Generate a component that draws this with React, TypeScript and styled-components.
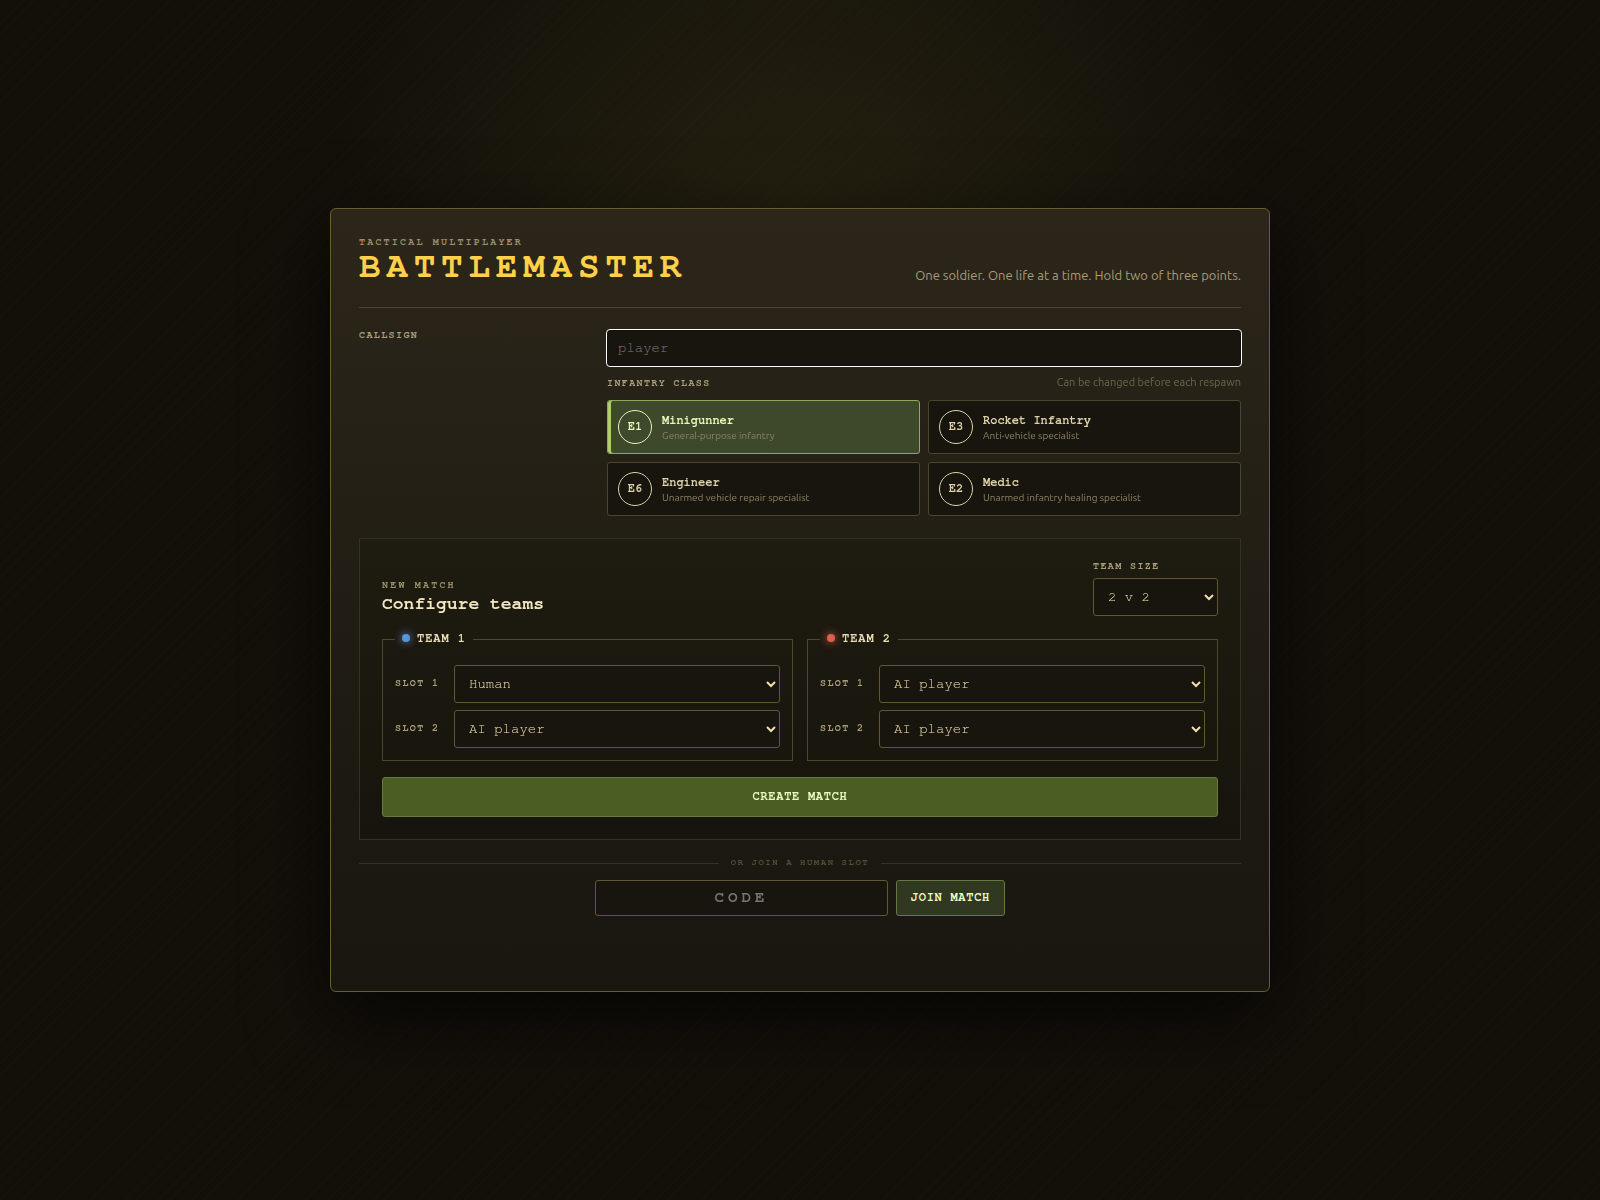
import React, { useState } from "react";
import styled, { createGlobalStyle, css } from "styled-components";

const mono = `FreeMono, "Liberation Mono", monospace`;
const sans = `Ubuntu, "Noto Sans", sans-serif`;

const GlobalStyle = createGlobalStyle`
  * {
    box-sizing: border-box;
  }

  html {
    color-scheme: dark;
  }

  body {
    margin: 0;
    background: #13110a;
    color: #e8dcb5;
    font-family: ${sans};
  }

  h1, h2, p {
    margin: 0;
  }
`;

const Page = styled.main`
  display: flex;
  align-items: center;
  justify-content: center;
  min-height: 100vh;
  padding: 24px;
  background:
    radial-gradient(circle at 50% 20%, rgba(84, 76, 28, 0.27), transparent 38%),
    repeating-linear-gradient(135deg, rgba(255, 255, 255, 0.012) 0 1px, transparent 1px 8px),
    #13100a;
`;

const Panel = styled.div`
  display: grid;
  width: 100%;
  max-width: 940px;
  padding: 28px;
  border: 1px solid #6b5b32;
  border-radius: 6px;
  background: linear-gradient(180deg, #2c261a 0%, #1c1911 75%, #1a1710 100%);
  box-shadow: 0 24px 80px rgba(0, 0, 0, 0.7);
`;

const Header = styled.header`
  display: flex;
  align-items: flex-end;
  justify-content: space-between;
  gap: 24px;
  padding-bottom: 22px;
  border-bottom: 1px solid #4a4430;
`;

const Eyebrow = styled.p`
  color: #9a8f6a;
  font: 700 10px/11px ${mono};
  letter-spacing: 0.22em;
  text-transform: uppercase;
`;

const Title = styled.h1`
  color: #ffd14a;
  font: 700 36px/37px ${mono};
  letter-spacing: 0.16em;
  text-transform: uppercase;
`;

const Tagline = styled.p`
  color: #a89c78;
  font-size: 13px;
  line-height: 19px;
`;

const Profile = styled.section`
  display: grid;
  grid-template-columns: 220px minmax(0, 1fr);
  gap: 28px;
  padding: 22px 0;
`;

const labelText = css`
  color: #a99e7c;
  font: 700 10px/11px ${mono};
  letter-spacing: 0.14em;
  text-transform: uppercase;
`;

const Label = styled.label`
  ${labelText}
  padding-bottom: 2px;
`;

const ProfileFields = styled.div`
  display: grid;
`;

const fieldBox = css`
  min-width: 0;
  width: 100%;
  border: 1px solid #625634;
  border-radius: 3px;
  background: #18150e;
  color: #f0e0b0;
  font: 400 14px/16px ${mono};
`;

const CallsignInput = styled.input`
  ${fieldBox}
  height: 36px;
  padding: 0 10px;

  &:focus {
    outline: 1px solid #ffffff;
    border-color: #0e0f10;
  }

  &::placeholder {
    color: #7c7c7c;
  }
`;

const ClassGroup = styled.div`
  display: grid;
`;

const ClassHeading = styled.div`
  display: flex;
  align-items: center;
  justify-content: space-between;
  height: 34px;
`;

const ClassTitle = styled.span`
  ${labelText}
`;

const ClassHint = styled.span`
  padding-bottom: 2px;
  color: #6e6649;
  font-size: 11px;
  line-height: 14px;
`;

const ClassGrid = styled.div`
  display: grid;
  grid-template-columns: repeat(2, minmax(0, 1fr));
  gap: 8px;
`;

const ClassCard = styled.button<{ $selected: boolean }>`
  display: flex;
  align-items: center;
  gap: 10px;
  height: 54px;
  padding: 0 10px;
  border: 1px solid ${(p) => (p.$selected ? "#91aa57" : "#4c452e")};
  border-radius: 3px;
  background: ${(p) => (p.$selected ? "#3e482a" : "#18150e")};
  box-shadow: ${(p) => (p.$selected ? "inset 3px 0 #b0cd69" : "none")};
  color: ${(p) => (p.$selected ? "#e6f7b8" : "#dcd1a9")};
  text-align: left;
  cursor: pointer;
`;

const ClassCode = styled.span`
  display: grid;
  place-items: center;
  flex: none;
  width: 34px;
  height: 34px;
  padding-bottom: 2px;
  border: 1px solid currentColor;
  border-radius: 50%;
  font: 700 12px/14px ${mono};
`;

const ClassText = styled.span`
  display: grid;
  gap: 2px;
  padding-top: 2px;
`;

const ClassName = styled.strong`
  font: 700 12px/14px ${mono};
`;

const ClassRole = styled.small`
  color: #8b8164;
  font-family: ${sans};
  font-size: 10px;
  line-height: 14px;
`;

const MatchSection = styled.section`
  display: grid;
  gap: 16px;
  padding: 22px;
  border: 1px solid #353020;
  background: linear-gradient(180deg, #1e1b10, #17140d);
`;

const MatchHead = styled.div`
  display: flex;
  align-items: flex-end;
  justify-content: space-between;
`;

const MatchHeading = styled.div`
  display: grid;
  gap: 1px;
`;

const MatchTitle = styled.h2`
  color: #f2e6c0;
  font: 700 18px/24px ${mono};
`;

const SizeField = styled.div`
  display: grid;
  gap: 4px;
  width: 125px;
`;

const Select = styled.select`
  ${fieldBox}
  height: 38px;
  padding: 0 10px;
`;

const Teams = styled.div`
  display: grid;
  grid-template-columns: repeat(2, minmax(0, 1fr));
  gap: 14px;
`;

const TeamBox = styled.fieldset`
  display: grid;
  gap: 7px;
  min-width: 0;
  margin: 0;
  padding: 19px 12px 12px;
  border: 1px solid #4f472d;
`;

const TeamLegend = styled.legend`
  display: flex;
  align-items: center;
  gap: 7px;
  padding: 0 7px 2px;
  color: #e8dcb5;
  font: 700 12px/12px ${mono};
  letter-spacing: 0.08em;
  text-transform: uppercase;
`;

const TeamDot = styled.i<{ $color: string }>`
  width: 8px;
  height: 8px;
  border-radius: 50%;
  background: ${(p) => p.$color};
  box-shadow: 0 0 8px ${(p) => p.$color};
`;

const Slot = styled.div`
  display: grid;
  grid-template-columns: 52px minmax(0, 1fr);
  align-items: center;
  gap: 7px;
`;

const Button = styled.button<{ $primary?: boolean }>`
  height: ${(p) => (p.$primary ? "40px" : "36px")};
  padding: 0 14px 2px;
  border: 1px solid #657a3c;
  border-radius: 3px;
  background: ${(p) => (p.$primary ? "#4a5d22" : "#313821")};
  color: #ecfcc4;
  font: 700 12px/14px ${mono};
  letter-spacing: 0.06em;
  text-transform: uppercase;
  cursor: pointer;
`;

const Divider = styled.div`
  display: flex;
  align-items: center;
  gap: 12px;
  padding: 17px 0 10px;
  color: #544b37;
  font: 700 9px/11px ${mono};
  letter-spacing: 0.17em;
  text-transform: uppercase;

  &::before,
  &::after {
    content: "";
    flex: 1;
    height: 1px;
    background: #353020;
  }
`;

const DividerText = styled.span`
  padding-bottom: 2px;
`;

const JoinForm = styled.form`
  display: grid;
  grid-template-columns: minmax(0, 1fr) auto;
  gap: 8px;
  width: 100%;
  max-width: 410px;
  margin: 0 auto;
`;

const CodeInput = styled.input`
  ${fieldBox}
  height: 36px;
  padding: 0 10px 2px;
  font-size: 16px;
  font-weight: 700;
  letter-spacing: 0.24em;
  text-align: center;
  text-transform: uppercase;

  &::placeholder {
    color: #757575;
  }
`;

const Status = styled.p`
  min-height: 47px;
  padding-top: 14px;
  font-size: 12px;
  text-align: center;
`;

const classes = [
  { code: "E1", name: "Minigunner", role: "General-purpose infantry" },
  { code: "E3", name: "Rocket Infantry", role: "Anti-vehicle specialist" },
  { code: "E6", name: "Engineer", role: "Unarmed vehicle repair specialist" },
  { code: "E2", name: "Medic", role: "Unarmed infantry healing specialist" },
];

const teams = [
  { name: "Team 1", color: "#5b93d6", slots: ["Human", "AI player"] },
  { name: "Team 2", color: "#d9614f", slots: ["AI player", "AI player"] },
];

export default function App() {
  const [selected, setSelected] = useState("E1");

  return (
    <>
      <GlobalStyle />
      <Page>
        <Panel>
          <Header>
            <div>
              <Eyebrow>Tactical multiplayer</Eyebrow>
              <Title>Battlemaster</Title>
            </div>
            <Tagline>One soldier. One life at a time. Hold two of three points.</Tagline>
          </Header>

          <Profile>
            <Label htmlFor="callsign">Callsign</Label>
            <ProfileFields>
              <CallsignInput id="callsign" placeholder="player" autoComplete="off" autoFocus />
              <ClassGroup role="group" aria-labelledby="class-title">
                <ClassHeading>
                  <ClassTitle id="class-title">Infantry class</ClassTitle>
                  <ClassHint>Can be changed before each respawn</ClassHint>
                </ClassHeading>
                <ClassGrid>
                  {classes.map((c) => (
                    <ClassCard
                      key={c.code}
                      type="button"
                      $selected={c.code === selected}
                      aria-pressed={c.code === selected}
                      onClick={() => setSelected(c.code)}
                    >
                      <ClassCode>{c.code}</ClassCode>
                      <ClassText>
                        <ClassName>{c.name}</ClassName>
                        <ClassRole>{c.role}</ClassRole>
                      </ClassText>
                    </ClassCard>
                  ))}
                </ClassGrid>
              </ClassGroup>
            </ProfileFields>
          </Profile>

          <MatchSection>
            <MatchHead>
              <MatchHeading>
                <Eyebrow>New match</Eyebrow>
                <MatchTitle>Configure teams</MatchTitle>
              </MatchHeading>
              <SizeField>
                <Label htmlFor="team-size">Team size</Label>
                <Select id="team-size" defaultValue="2 v 2">
                  <option>1 v 1</option>
                  <option>2 v 2</option>
                  <option>3 v 3</option>
                </Select>
              </SizeField>
            </MatchHead>

            <Teams>
              {teams.map((team, t) => (
                <TeamBox key={team.name}>
                  <TeamLegend>
                    <TeamDot $color={team.color} />
                    {team.name}
                  </TeamLegend>
                  {team.slots.map((value, s) => (
                    <Slot key={s}>
                      <Label htmlFor={`team-${t}-slot-${s}`}>Slot {s + 1}</Label>
                      <Select id={`team-${t}-slot-${s}`} defaultValue={value}>
                        <option>Human</option>
                        <option>AI player</option>
                      </Select>
                    </Slot>
                  ))}
                </TeamBox>
              ))}
            </Teams>

            <Button type="button" $primary>
              Create match
            </Button>
          </MatchSection>

          <Divider>
            <DividerText>or join a human slot</DividerText>
          </Divider>

          <JoinForm onSubmit={(e) => e.preventDefault()}>
            <CodeInput aria-label="Match code" placeholder="CODE" maxLength={6} />
            <Button type="submit">Join match</Button>
          </JoinForm>
          <Status role="status" />
        </Panel>
      </Page>
    </>
  );
}
